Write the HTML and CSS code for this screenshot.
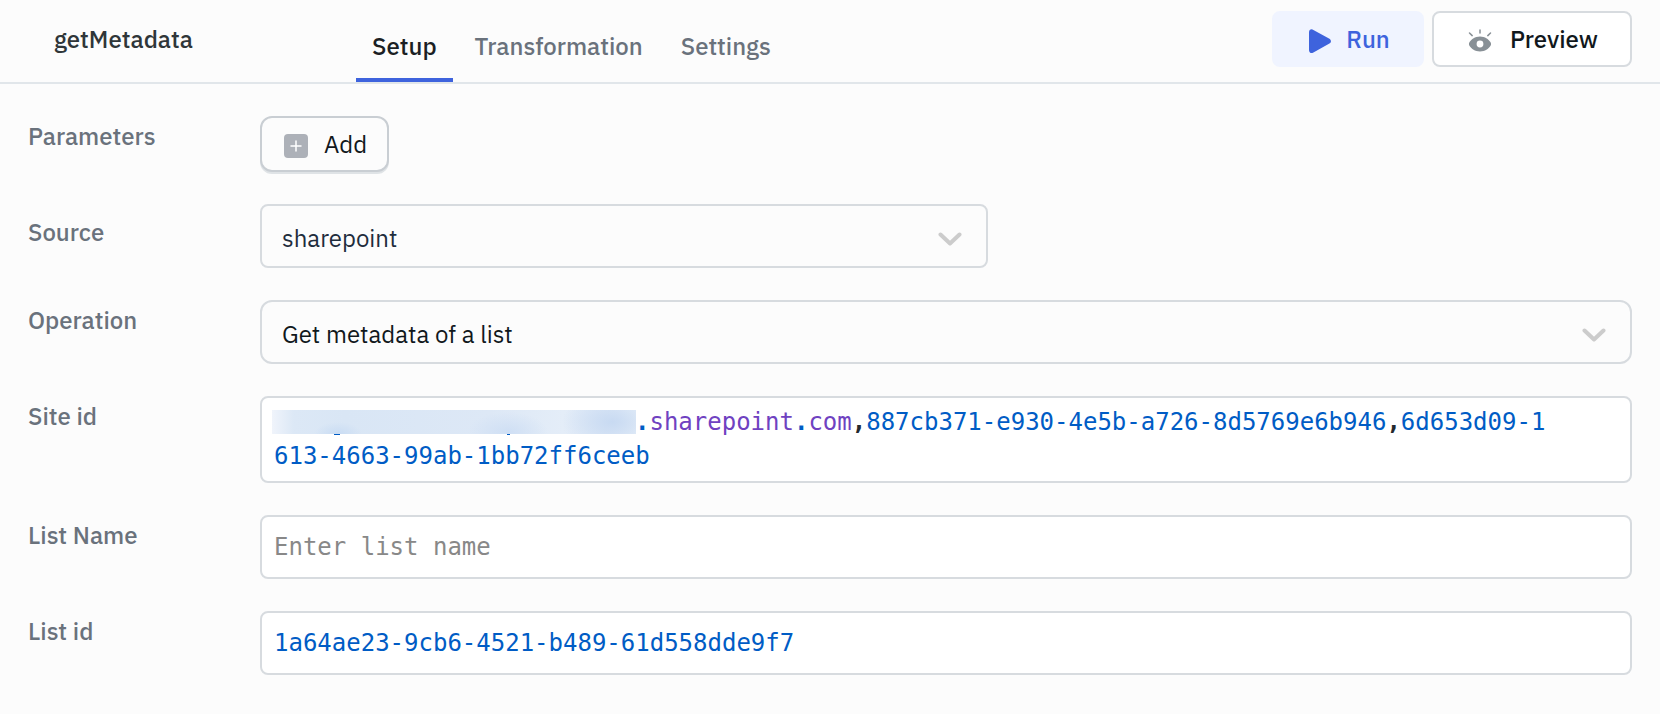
FILE: index.html
```html
<!DOCTYPE html>
<html lang="en">
<head>
<meta charset="utf-8">
<meta name="viewport" content="width=device-width, initial-scale=1">
<title>getMetadata</title>
<link rel="stylesheet" href="styles.css">
</head>
<body>
<header class="header">
  <h1 class="query-name">getMetadata</h1>
  <nav class="tabs" aria-label="Query sections">
    <a class="tab tab-active" href="#setup" aria-current="page">Setup</a>
    <a class="tab" href="#transformation">Transformation</a>
    <a class="tab" href="#settings">Settings</a>
  </nav>
  <div class="actions">
    <button class="button button-run" type="button">
      <svg class="icon" width="24" height="24" viewBox="0 0 24 24" aria-hidden="true"><path d="M1 3.500C1 .8 3.200-.4 5.400.9L21 9.600c2.600 1.400 2.600 3.800 0 5.200L5.400 23.600C3.200 24.800 1 23.700 1 21z" fill="#3e63dd"/></svg>
      Run
    </button>
    <button class="button button-preview" type="button">
      <svg class="icon" width="24" height="24" viewBox="0 0 24 24" aria-hidden="true"><path d="M12 7.500c5.200 0 8.400 2.900 10.400 5.500.9 1.200.9 2.800 0 4-2 2.600-5.200 5.500-10.400 5.500S3.600 19.600 1.600 17c-.9-1.200-.9-2.800 0-4C3.600 10.400 6.800 7.500 12 7.500zm0 4.100a3.400 3.400 0 1 0 0 6.800 3.400 3.400 0 0 0 0-6.800z" fill="#889096"/><path d="M12 1v3M1.500 4l2.700 2.600M22.500 4l-2.700 2.600" stroke="#889096" stroke-width="1.500" stroke-linecap="round"/></svg>
      Preview
    </button>
  </div>
</header>
<main class="form">
  <div class="row">
    <span class="label">Parameters</span>
    <button class="button button-add" type="button">
      <svg class="icon" width="24" height="24" viewBox="0 0 24 24" aria-hidden="true"><rect width="24" height="24" rx="4" fill="#adb1b8"/><path d="M12 7v10M7 12h10" stroke="#fff" stroke-width="1.500" stroke-linecap="round"/></svg>
      Add
    </button>
  </div>
  <div class="row">
    <label class="label label-low" for="source">Source</label>
    <div class="select-box select-source">
      <select class="field select" id="source"><option>sharepoint</option></select>
      <svg class="chevron" width="24" height="24" viewBox="0 0 24 24" aria-hidden="true"><path d="M2.500 7.500L12 16.500l9.500-9" fill="none" stroke="#ccc" stroke-width="4" stroke-linecap="round" stroke-linejoin="round"/></svg>
    </div>
  </div>
  <div class="row">
    <label class="label" for="operation">Operation</label>
    <div class="select-box">
      <select class="field select select-operation" id="operation"><option>Get metadata of a list</option></select>
      <svg class="chevron" width="24" height="24" viewBox="0 0 24 24" aria-hidden="true"><path d="M2.500 7.500L12 16.500l9.500-9" fill="none" stroke="#ccc" stroke-width="4" stroke-linecap="round" stroke-linejoin="round"/></svg>
    </div>
  </div>
  <div class="row">
    <span class="label" id="site-label">Site id</span>
    <div class="field code editor" role="textbox" contenteditable="true" spellcheck="false" aria-labelledby="site-label"><span class="redacted" contenteditable="false"></span><span class="dot">.</span><span class="property">sharepoint</span><span class="dot">.</span><span class="property">com</span><span class="comma">,</span>887cb371-e930-4e5b-a726-8d5769e6b946<span class="comma">,</span>6d653d09-1613-4663-99ab-1bb72ff6ceeb</div>
  </div>
  <div class="row">
    <label class="label" for="list-name">List Name</label>
    <input class="field code" id="list-name" type="text" placeholder="Enter list name">
  </div>
  <div class="row">
    <label class="label" for="list-id">List id</label>
    <input class="field code" id="list-id" type="text" value="1a64ae23-9cb6-4521-b489-61d558dde9f7">
  </div>
</main>
</body>
</html>
```
FILE: styles.css
```css
* {
  box-sizing: border-box;
}

body {
  margin: 0;
  background: #fcfcfc;
  color: #11181c;
  font: 24px/32px "IBM Plex Sans", Roboto, sans-serif;
}

.header {
  display: flex;
  align-items: flex-start;
  height: 84px;
  padding-right: 28px;
  border-bottom: 2px solid #e1e6ea;
}

.query-name {
  flex: 0 0 356px;
  margin: 0;
  padding: 23px 0 0 54px;
  color: #2f3639;
  font-size: 24px;
  font-weight: 500;
}

.tabs {
  display: flex;
  align-self: stretch;
  gap: 6px;
}

.tab {
  padding: 30px 16px 0;
  border-bottom: 4px solid transparent;
  color: #6a727c;
  font-weight: 500;
  text-decoration: none;
}

.tab-active {
  border-color: #3e63dd;
  color: #1b1f24;
}

.actions {
  display: flex;
  gap: 8px;
  margin-left: auto;
  padding-top: 11px;
}

.button {
  display: flex;
  align-items: center;
  justify-content: center;
  height: 56px;
  padding: 0 4px 0 6px;
  border: 2px solid #d7dbdf;
  border-radius: 8px;
  background: #fff;
  color: #11181c;
  font: inherit;
  font-weight: 500;
}

.icon {
  flex: none;
  margin-top: 4px;
}

.button-run {
  gap: 14px;
  width: 152px;
  border-color: #f0f4ff;
  background: #f0f4ff;
  color: #3e63dd;
}

.button-preview {
  gap: 18px;
  width: 200px;
}

.button-add {
  gap: 16px;
  width: 129px;
  border-color: #c9ced3;
  border-radius: 12px;
  background: #fcfcfc;
  box-shadow: 0 2px 0 #dfe3e6;
  font-weight: 400;
}

.form {
  display: grid;
  gap: 32px;
  padding: 32px 28px;
}

.row {
  display: grid;
  grid-template-columns: 232px minmax(0, 1fr);
  align-items: start;
}

.label {
  padding-top: 4px;
  color: #6a727c;
  font-weight: 500;
}

.label-low {
  padding-top: 12px;
}

.field {
  width: 100%;
  height: 64px;
  border: 2px solid #d7dbdf;
  border-radius: 8px;
  background: #fff;
}

.select-box {
  display: grid;
  align-items: center;
}

.select-source {
  max-width: 728px;
}

.select,
.chevron {
  grid-area: 1 / 1;
}

.select {
  padding: 4px 64px 0 20px;
  appearance: none;
  background: #fcfcfc;
  color: #1f2d3d;
  font: inherit;
}

.select-operation {
  border-radius: 12px;
  color: #11181c;
}

.chevron {
  justify-self: end;
  margin: 6px 26px 0 0;
  pointer-events: none;
}

.code {
  padding: 0 12px;
  color: #005cc5;
  font: 24px/34px "DejaVu Sans Mono", monospace;
}

.code::placeholder {
  color: #888;
  opacity: 1;
}

.editor {
  height: auto;
  padding: 7px 72px 8px 12px;
  word-break: break-all;
}

.property {
  color: #6f42c1;
}

.dot {
  font-weight: 700;
}

.comma {
  color: #24292e;
  font-weight: 700;
}

/* Masked host name: soft tint with two descender tips along its lower edge */
.redacted {
  display: inline-block;
  width: 364px;
  height: 25px;
  margin: 0 -1px 0 -2px;
  vertical-align: -5px;
  background:
    linear-gradient(#005cc5, #005cc5) 62px 24px / 6px 1px no-repeat,
    linear-gradient(#005cc5, #005cc5) 235px 24px / 3px 1px no-repeat,
    radial-gradient(ellipse 24px 12px at 66px 24px, #c9dcf3, transparent) 0 0 / 100% 24px no-repeat,
    radial-gradient(ellipse 40px 20px at 236px 22px, #cfdff4, transparent) 0 0 / 100% 24px no-repeat,
    radial-gradient(ellipse 50px 28px at 340px 12px, #c8daf2, transparent) 0 0 / 100% 24px no-repeat,
    linear-gradient(90deg, #f0f4fb, #dce8f6 6%, #d9e6f5 20%, #dde8f6 60%, #e4edf8 80%, #dde8f6 92%, #e8f0f9) 0 0 / 100% 24px no-repeat;
}
```
